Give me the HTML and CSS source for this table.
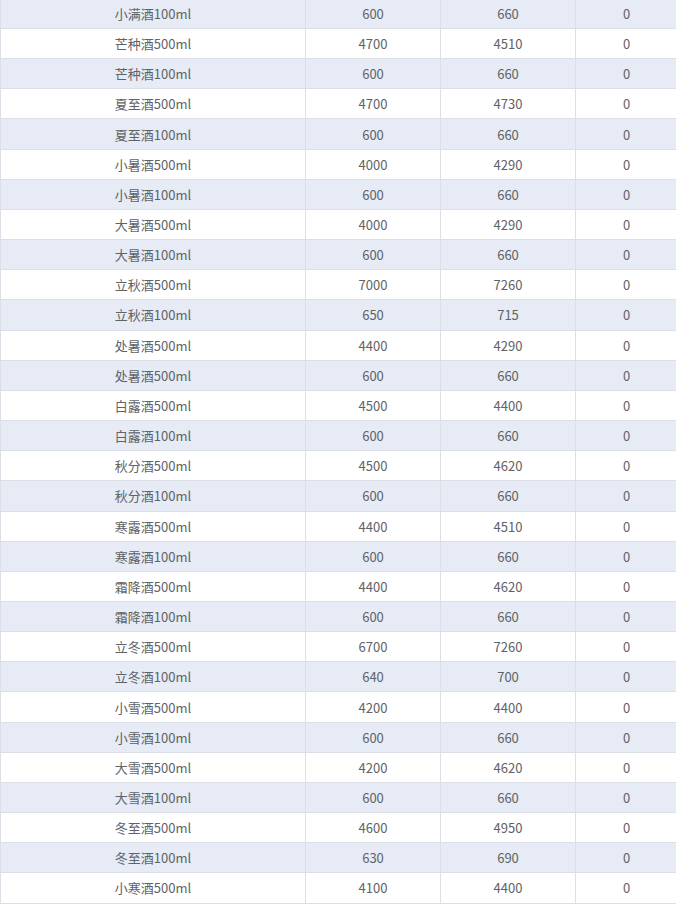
FILE: index.html
```html
<!DOCTYPE html>
<html lang="zh-CN">
<head>
<meta charset="utf-8">
<title>酒品价格表</title>
<link rel="stylesheet" href="styles.css">
</head>
<body>
<div class="table">
  <div class="row stripe"><div class="cell c1">小满酒100ml</div><div class="cell c2">600</div><div class="cell c3">660</div><div class="cell c4">0</div></div>
  <div class="row"><div class="cell c1">芒种酒500ml</div><div class="cell c2">4700</div><div class="cell c3">4510</div><div class="cell c4">0</div></div>
  <div class="row stripe"><div class="cell c1">芒种酒100ml</div><div class="cell c2">600</div><div class="cell c3">660</div><div class="cell c4">0</div></div>
  <div class="row"><div class="cell c1">夏至酒500ml</div><div class="cell c2">4700</div><div class="cell c3">4730</div><div class="cell c4">0</div></div>
  <div class="row stripe"><div class="cell c1">夏至酒100ml</div><div class="cell c2">600</div><div class="cell c3">660</div><div class="cell c4">0</div></div>
  <div class="row"><div class="cell c1">小暑酒500ml</div><div class="cell c2">4000</div><div class="cell c3">4290</div><div class="cell c4">0</div></div>
  <div class="row stripe"><div class="cell c1">小暑酒100ml</div><div class="cell c2">600</div><div class="cell c3">660</div><div class="cell c4">0</div></div>
  <div class="row"><div class="cell c1">大暑酒500ml</div><div class="cell c2">4000</div><div class="cell c3">4290</div><div class="cell c4">0</div></div>
  <div class="row stripe"><div class="cell c1">大暑酒100ml</div><div class="cell c2">600</div><div class="cell c3">660</div><div class="cell c4">0</div></div>
  <div class="row"><div class="cell c1">立秋酒500ml</div><div class="cell c2">7000</div><div class="cell c3">7260</div><div class="cell c4">0</div></div>
  <div class="row stripe"><div class="cell c1">立秋酒100ml</div><div class="cell c2">650</div><div class="cell c3">715</div><div class="cell c4">0</div></div>
  <div class="row"><div class="cell c1">处暑酒500ml</div><div class="cell c2">4400</div><div class="cell c3">4290</div><div class="cell c4">0</div></div>
  <div class="row stripe"><div class="cell c1">处暑酒500ml</div><div class="cell c2">600</div><div class="cell c3">660</div><div class="cell c4">0</div></div>
  <div class="row"><div class="cell c1">白露酒500ml</div><div class="cell c2">4500</div><div class="cell c3">4400</div><div class="cell c4">0</div></div>
  <div class="row stripe"><div class="cell c1">白露酒100ml</div><div class="cell c2">600</div><div class="cell c3">660</div><div class="cell c4">0</div></div>
  <div class="row"><div class="cell c1">秋分酒500ml</div><div class="cell c2">4500</div><div class="cell c3">4620</div><div class="cell c4">0</div></div>
  <div class="row stripe"><div class="cell c1">秋分酒100ml</div><div class="cell c2">600</div><div class="cell c3">660</div><div class="cell c4">0</div></div>
  <div class="row"><div class="cell c1">寒露酒500ml</div><div class="cell c2">4400</div><div class="cell c3">4510</div><div class="cell c4">0</div></div>
  <div class="row stripe"><div class="cell c1">寒露酒100ml</div><div class="cell c2">600</div><div class="cell c3">660</div><div class="cell c4">0</div></div>
  <div class="row"><div class="cell c1">霜降酒500ml</div><div class="cell c2">4400</div><div class="cell c3">4620</div><div class="cell c4">0</div></div>
  <div class="row stripe"><div class="cell c1">霜降酒100ml</div><div class="cell c2">600</div><div class="cell c3">660</div><div class="cell c4">0</div></div>
  <div class="row"><div class="cell c1">立冬酒500ml</div><div class="cell c2">6700</div><div class="cell c3">7260</div><div class="cell c4">0</div></div>
  <div class="row stripe"><div class="cell c1">立冬酒100ml</div><div class="cell c2">640</div><div class="cell c3">700</div><div class="cell c4">0</div></div>
  <div class="row"><div class="cell c1">小雪酒500ml</div><div class="cell c2">4200</div><div class="cell c3">4400</div><div class="cell c4">0</div></div>
  <div class="row stripe"><div class="cell c1">小雪酒100ml</div><div class="cell c2">600</div><div class="cell c3">660</div><div class="cell c4">0</div></div>
  <div class="row"><div class="cell c1">大雪酒500ml</div><div class="cell c2">4200</div><div class="cell c3">4620</div><div class="cell c4">0</div></div>
  <div class="row stripe"><div class="cell c1">大雪酒100ml</div><div class="cell c2">600</div><div class="cell c3">660</div><div class="cell c4">0</div></div>
  <div class="row"><div class="cell c1">冬至酒500ml</div><div class="cell c2">4600</div><div class="cell c3">4950</div><div class="cell c4">0</div></div>
  <div class="row stripe"><div class="cell c1">冬至酒100ml</div><div class="cell c2">630</div><div class="cell c3">690</div><div class="cell c4">0</div></div>
  <div class="row"><div class="cell c1">小寒酒500ml</div><div class="cell c2">4100</div><div class="cell c3">4400</div><div class="cell c4">0</div></div>
</div>
</body>
</html>
```
FILE: styles.css
```css
html, body {
  margin: 0;
  padding: 0;
  background: #ffffff;
  overflow: hidden;
}
.table {
  margin-top: -1.17px;
  border-left: 1px solid #dcdfe6;
  font-family: "Noto Sans CJK SC", "Noto Sans", sans-serif;
  font-size: 13px;
  color: #606266;
}
.row {
  display: grid;
  grid-template-columns: 305px 135px 135px 101px;
  height: 30.17px;
  box-sizing: border-box;
  border-bottom: 1px solid #dcdfe6;
  background: #ffffff;
}
.row.stripe {
  background: #e6ebf5;
}
.cell {
  display: flex;
  align-items: center;
  justify-content: center;
  border-right: 1px solid #dcdfe6;
  line-height: 1;
}
.c4 {
  border-right: none;
}
```
